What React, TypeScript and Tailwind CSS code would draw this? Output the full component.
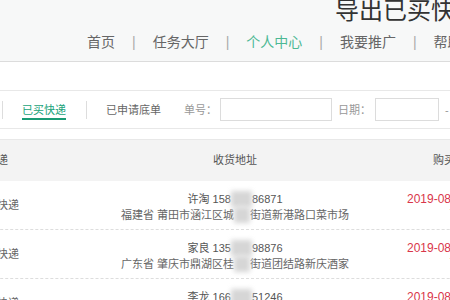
import React from 'react';

interface Row {
  express: string;
  name: string;
  phoneTail: string;
  addrHead: string;
  addrTail: string;
  date: string;
}

const rows: Row[] = [
  {
    express: '韵达快递',
    name: '许淘 158',
    phoneTail: '86871',
    addrHead: '福建省 莆田市涵江区城',
    addrTail: '街道新港路口菜市场',
    date: '2019-08-12 09:31:45',
  },
  {
    express: '韵达快递',
    name: '家良 135',
    phoneTail: '98876',
    addrHead: '广东省 肇庆市鼎湖区桂',
    addrTail: '街道团结路新庆酒家',
    date: '2019-08-12 09:30:12',
  },
  {
    express: '韵达快递',
    name: '李龙 166',
    phoneTail: '51246',
    addrHead: '河南省 郑州市金水区文',
    addrTail: '街道花园路国基路口',
    date: '2019-08-12 09:28:57',
  },
];

const navItems = ['首页', '任务大厅', '个人中心', '我要推广', '帮助中心'];

// blurred (mosaic) part of the phone number / address
function Smudge({ w }: { w: string }) {
  return <span className={`inline-block h-[16px] align-top bg-[#d6d6d6] blur-[2.5px] ${w}`} />;
}

export default function App() {
  return (
    <div className="w-[450px] h-[300px] overflow-hidden bg-white font-[family-name:'Liberation_Sans','Noto_Sans_CJK_SC',sans-serif]">
      {/* top header */}
      <div className="h-[63px] bg-[#f7f8f8] border-b border-[#dcdcdc]">
        <div className="-mt-[1px] pl-[335px] text-[24px] leading-[24px] text-[#333] whitespace-nowrap">
          导出已买快递数据
        </div>
        <div className="mt-[9px] flex items-center pl-[87px] text-[14px] leading-[20px] whitespace-nowrap">
          {navItems.map((item, i) => (
            <React.Fragment key={item}>
              {i > 0 && <span className="mx-[17px] text-[#aaa]">|</span>}
              <span className={i === 2 ? 'text-[#4cb894]' : 'text-[#666]'}>{item}</span>
            </React.Fragment>
          ))}
        </div>
      </div>

      {/* tabs + filters */}
      <div className="mt-[28px] h-[39px] flex items-center border-y border-[#e8e8e8] pl-[2px] text-[11px] leading-[14px] whitespace-nowrap">
        <span className="w-px h-[18px] bg-[#dddddd]" />
        <span className="ml-[19px] mt-[3px] pb-[1px] border-b-2 border-[#1a9b74] text-[#1aa37a]">已买快递</span>
        <span className="ml-[20px] w-px h-[18px] bg-[#dddddd]" />
        <span className="ml-[19px] text-[#666]">已申请底单</span>
        <span className="ml-[23px] text-[#999]">单号：</span>
        <span className="ml-[3px] w-[112px] h-[23px] border border-[#dcdcdc] bg-white" />
        <span className="ml-[6px] text-[#999]">日期：</span>
        <span className="ml-[4px] w-[64px] h-[23px] border border-[#dcdcdc] bg-white" />
        <span className="ml-[6px] text-[#999]">-</span>
      </div>

      {/* table */}
      <div className="mt-[10px] -ml-[60px] w-[620px] border-t border-[#e8e8e8] text-[11px] whitespace-nowrap">
        <div className="h-[41px] flex items-center bg-[#f3f3f3] text-[#555]">
          <div className="w-[114px] shrink-0 text-center">快递</div>
          <div className="w-[353px] shrink-0 pl-[9px] text-center">收货地址</div>
          <div className="flex-1 pl-[26px]">购买时间</div>
        </div>
        {rows.map((r) => (
          <div key={r.name} className="h-[49px] flex border-b border-dashed border-[#dddddd]">
            <div className="w-[114px] shrink-0 flex items-center justify-center text-[#666]">{r.express}</div>
            <div className="w-[353px] shrink-0 pl-[9px] pt-[4px] flex flex-col justify-center items-center leading-[16px]">
              <div className="text-[#555]">
                {r.name}
                <Smudge w="w-[21px]" />
                {r.phoneTail}
              </div>
              <div className="text-[#666]">
                {r.addrHead}
                <Smudge w="w-[16px]" />
                {r.addrTail}
              </div>
            </div>
            <div className="flex-1 pt-[4px] flex flex-col justify-center leading-[16px] text-[12px] text-[#d9364a]">
              <div>{r.date}</div>
              <div className="pl-[42px]">已导出</div>
            </div>
          </div>
        ))}
      </div>
    </div>
  );
}
